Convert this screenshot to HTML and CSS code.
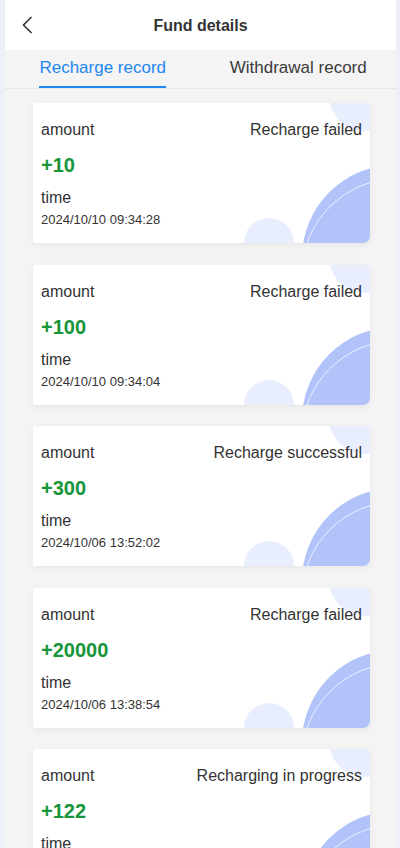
FILE: index.html
```html
<!DOCTYPE html>
<html>
<head>
<meta charset="utf-8">
<link rel="stylesheet" href="styles.css">
</head>
<body>
<div class="app">
  <header class="header">
    <svg class="back" width="12" height="18" viewBox="0 0 12 18"><path d="M10.5 1 L2.5 9 L10.5 17" fill="none" stroke="#333" stroke-width="1.6"/></svg>
    <div class="title">Fund details</div>
  </header>
  <nav class="tabs">
    <div class="tab active"><span>Recharge record</span></div>
    <div class="tab"><span>Withdrawal record</span></div>
  </nav>
  <main class="list">
    <div class="card">
      <div class="deco top"></div><div class="deco bottom"></div><div class="deco big"></div><div class="deco ring"></div>
      <div class="row"><span>amount</span><span>Recharge failed</span></div>
      <div class="amount">+10</div>
      <div class="label">time</div>
      <div class="date">2024/10/10 09:34:28</div>
    </div>
    <div class="card">
      <div class="deco top"></div><div class="deco bottom"></div><div class="deco big"></div><div class="deco ring"></div>
      <div class="row"><span>amount</span><span>Recharge failed</span></div>
      <div class="amount">+100</div>
      <div class="label">time</div>
      <div class="date">2024/10/10 09:34:04</div>
    </div>
    <div class="card">
      <div class="deco top"></div><div class="deco bottom"></div><div class="deco big"></div><div class="deco ring"></div>
      <div class="row"><span>amount</span><span>Recharge successful</span></div>
      <div class="amount">+300</div>
      <div class="label">time</div>
      <div class="date">2024/10/06 13:52:02</div>
    </div>
    <div class="card">
      <div class="deco top"></div><div class="deco bottom"></div><div class="deco big"></div><div class="deco ring"></div>
      <div class="row"><span>amount</span><span>Recharge failed</span></div>
      <div class="amount">+20000</div>
      <div class="label">time</div>
      <div class="date">2024/10/06 13:38:54</div>
    </div>
    <div class="card">
      <div class="deco top"></div><div class="deco bottom"></div><div class="deco big"></div><div class="deco ring"></div>
      <div class="row"><span>amount</span><span>Recharging in progress</span></div>
      <div class="amount">+122</div>
      <div class="label">time</div>
      <div class="date">2024/10/06 13:30:12</div>
    </div>
  </main>
</div>
</body>
</html>
```
FILE: styles.css
```css
html, body {
  margin: 0;
  padding: 0;
}
body {
  background: #edf0f8;
  font-family: "Liberation Sans", Arial, sans-serif;
  color: #333;
  height: 848px;
  overflow: hidden;
}
.app {
  margin: 0 4px 0 5px;
  background: #f4f4f4;
  min-height: 848px;
}
.header {
  height: 50px;
  background: #fff;
  display: flex;
  align-items: center;
  justify-content: center;
  position: relative;
}
.back {
  position: absolute;
  left: 16px;
  top: 16px;
}
.title {
  font-size: 16px;
  font-weight: bold;
  color: #333;
  padding-top: 1px;
}
.tabs {
  display: flex;
  height: 38px;
  border-bottom: 1px solid #e6e6e6;
}
.tab {
  flex: 1;
  display: flex;
  justify-content: center;
  font-size: 17px;
  color: #3a3a3a;
}
.tab span {
  display: block;
  padding-top: 8px;
  height: 28px;
  border-bottom: 2px solid transparent;
}
.tab.active span {
  color: #1f86f0;
  border-bottom-color: #1f86f0;
}
.list {
  padding: 14px 26px 0 28px;
  display: flex;
  flex-direction: column;
  gap: 21.5px;
}
.card {
  position: relative;
  overflow: hidden;
  height: 140px;
  box-sizing: border-box;
  background: #fff;
  border-radius: 3px 3px 7px 3px;
  box-shadow: 0 2px 6px rgba(0, 0, 0, 0.06);
  padding: 15px 8px 0 8px;
  flex-shrink: 0;
}
.deco {
  position: absolute;
  border-radius: 50%;
}
.deco.top {
  width: 72px;
  height: 72px;
  left: 296px;
  top: -44px;
  background: #e9eefe;
}
.deco.bottom {
  width: 50px;
  height: 50px;
  left: 211px;
  top: 115px;
  background: #e9eefe;
}
.deco.big {
  width: 186px;
  height: 186px;
  left: 269px;
  top: 62px;
  background: #b1c3f9;
}
.deco.ring {
  width: 192px;
  height: 192px;
  left: 268px;
  top: 75px;
  border: 1px solid rgba(255, 255, 255, 0.75);
}
.row {
  position: relative;
  display: flex;
  justify-content: space-between;
  font-size: 16px;
  line-height: 24px;
}
.amount {
  position: relative;
  margin-top: 9px;
  font-size: 20px;
  font-weight: bold;
  line-height: 28px;
  color: #17953a;
}
.label {
  position: relative;
  margin-top: 7px;
  font-size: 16px;
  line-height: 24px;
}
.date {
  position: relative;
  margin-top: 1px;
  font-size: 13px;
  line-height: 18px;
}
```
